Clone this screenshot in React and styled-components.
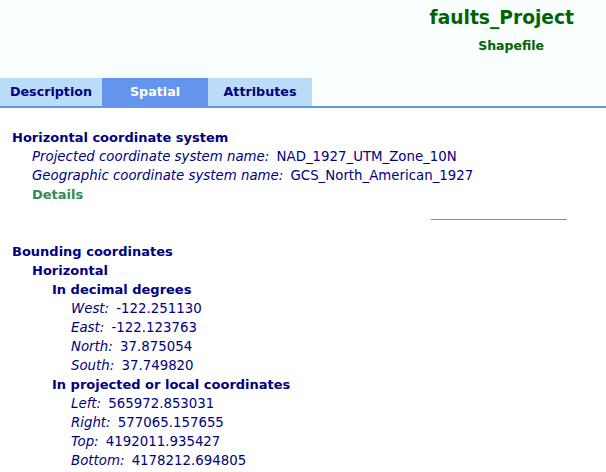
import React from "react";
import styled, { createGlobalStyle } from "styled-components";

const GlobalStyle = createGlobalStyle`
  html, body {
    margin: 0;
    padding: 0;
    background: #ffffff;
  }
  body {
    font-family: "DejaVu Sans", Verdana, sans-serif;
    color: #000080;
  }
`;

const Page = styled.div`
  width: 606px;
  min-height: 472px;
  overflow: hidden;
`;

const Header = styled.header`
  background: #f9feff;
  display: flex;
  flex-direction: column;
`;

const TitleBlock = styled.div`
  display: flex;
  flex-direction: column;
  align-items: flex-end;
  padding-top: 7px;
`;

const Title = styled.div`
  font-size: 18.67px;
  font-weight: bold;
  line-height: 22px;
  color: #006400;
  margin-right: 32px;
`;

const Subtitle = styled.div`
  font-size: 12.5px;
  font-weight: bold;
  line-height: 16px;
  color: #006400;
  margin-top: 9px;
  margin-right: 62px;
`;

const TabBar = styled.nav`
  display: flex;
  margin-top: 24px;
  border-bottom: 2px solid #6495ed;
`;

const Tab = styled.div`
  width: ${(p) => p.$w}px;
  height: 28px;
  line-height: 28px;
  text-align: center;
  font-size: 12.7px;
  font-weight: bold;
  background: ${(p) => (p.$active ? "#6495ed" : "#badcf8")};
  color: ${(p) => (p.$active ? "#ffffff" : "#000080")};
`;

const Content = styled.main`
  padding-top: 20px;
  display: flex;
  flex-direction: column;
`;

const Heading = styled.div`
  font-size: 13px;
  font-weight: bold;
  line-height: 19px;
  color: #000080;
  padding-left: ${(p) => p.$indent}px;
  white-space: nowrap;
`;

const Field = styled.div`
  font-size: 13.33px;
  line-height: 19px;
  color: #000080;
  padding-left: ${(p) => p.$indent}px;
  white-space: nowrap;
`;

const Label = styled.em`
  font-style: italic;
`;

const Value = styled.span`
  margin-left: 3px;
`;

const LinkText = styled.div`
  font-size: 13px;
  font-weight: bold;
  line-height: 19px;
  color: #2e8b57;
  padding-left: ${(p) => p.$indent}px;
`;

const Rule = styled.div`
  width: 136px;
  height: 1px;
  background: #6495ed;
  margin: 15px 39px 22px auto;
`;

const tabs = [
  { name: "Description", w: 102 },
  { name: "Spatial", w: 106, active: true },
  { name: "Attributes", w: 104 },
];

const Row = ({ indent, label, value }) => (
  <Field $indent={indent}>
    <Label>{label}:</Label> <Value>{value}</Value>
  </Field>
);

export default function App() {
  return (
    <Page>
      <GlobalStyle />
      <Header>
        <TitleBlock>
          <Title>faults_Project</Title>
          <Subtitle>Shapefile</Subtitle>
        </TitleBlock>
        <TabBar>
          {tabs.map((t) => (
            <Tab key={t.name} $w={t.w} $active={t.active}>
              {t.name}
            </Tab>
          ))}
        </TabBar>
      </Header>
      <Content>
        <Heading $indent={12}>Horizontal coordinate system</Heading>
        <Row indent={32} label="Projected coordinate system name" value="NAD_1927_UTM_Zone_10N" />
        <Row indent={32} label="Geographic coordinate system name" value="GCS_North_American_1927" />
        <LinkText $indent={32}>Details</LinkText>
        <Rule />
        <Heading $indent={12}>Bounding coordinates</Heading>
        <Heading $indent={32}>Horizontal</Heading>
        <Heading $indent={52}>In decimal degrees</Heading>
        <Row indent={71} label="West" value="-122.251130" />
        <Row indent={71} label="East" value="-122.123763" />
        <Row indent={71} label="North" value="37.875054" />
        <Row indent={71} label="South" value="37.749820" />
        <Heading $indent={52}>In projected or local coordinates</Heading>
        <Row indent={71} label="Left" value="565972.853031" />
        <Row indent={71} label="Right" value="577065.157655" />
        <Row indent={71} label="Top" value="4192011.935427" />
        <Row indent={71} label="Bottom" value="4178212.694805" />
      </Content>
    </Page>
  );
}
